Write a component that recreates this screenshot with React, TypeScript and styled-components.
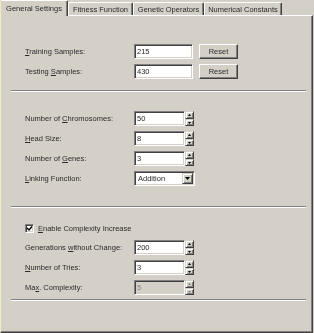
import React from 'react';
import styled, { createGlobalStyle } from 'styled-components';

const GlobalStyle = createGlobalStyle`
  html, body { margin: 0; padding: 0; background: #d4d0c8; }
  body {
    font-family: "Liberation Sans", Arial, sans-serif;
    font-size: 7.5px;
    color: #2a2a2a;
  }
`;

const Window = styled.div`
  width: 314px;
  height: 333px;
  background: #d4d0c8;
  overflow: hidden;
  display: flex;
  flex-direction: column;
  will-change: transform;
`;

const TabStrip = styled.div`
  display: flex;
  align-items: flex-end;
  height: 15px;
  position: relative;
  z-index: 1;
`;

const Tab = styled.div<{ $w: number; $active?: boolean }>`
  width: ${(p) => p.$w}px;
  box-sizing: border-box;
  height: ${(p) => (p.$active ? 16 : 13)}px;
  margin-bottom: ${(p) => (p.$active ? -1 : 0)}px;
  padding-top: ${(p) => (p.$active ? 3 : 2)}px;
  border-top: 1px solid #fff;
  border-left: 1px solid #fff;
  border-right: 1px solid #404040;
  box-shadow: inset -1px 0 #808080;
  border-radius: 2px 2px 0 0;
  background: #d4d0c8;
  text-align: center;
  white-space: nowrap;
  line-height: 9px;
  &:first-child {
    border-left-color: #f1eebb;
  }
`;

const Panel = styled.div`
  width: 313px;
  height: 318px;
  box-sizing: border-box;
  border-top: 1px solid #fff;
  border-left: 1px solid #f1eebb;
  border-right: 1px solid #404040;
  border-bottom: 1px solid #404040;
  box-shadow: inset -1px -1px #808080;
  padding: 0 6px 0 10px;
  display: flex;
  flex-direction: column;
`;

const Section = styled.div<{ $top: number }>`
  padding: ${(p) => p.$top}px 0 0 14px;
  display: flex;
  flex-direction: column;
  gap: 5px;
`;

const Separator = styled.div<{ $top: number }>`
  margin-top: ${(p) => p.$top}px;
  height: 0;
  border-top: 1px solid #808080;
  border-bottom: 1px solid #fff;
`;

const Row = styled.div`
  display: flex;
  align-items: center;
  height: 15px;
`;

const Label = styled.div`
  width: 109px;
  white-space: nowrap;
`;

const TextBox = styled.input<{ $w: number }>`
  width: ${(p) => p.$w}px;
  height: 15px;
  box-sizing: border-box;
  margin: 0;
  padding: 0 0 0 2px;
  font: inherit;
  color: #2a2a2a;
  border: 1px solid;
  border-color: #808080 #fff #fff #808080;
  box-shadow: inset 1px 1px #404040, inset -1px -1px #d4d0c8;
  background: #fff;
  outline: none;
  &:disabled {
    background: #d4d0c8;
    color: #808080;
  }
`;

const Button = styled.div`
  margin-left: 6px;
  width: 39px;
  height: 15px;
  box-sizing: border-box;
  border: 1px solid;
  border-color: #fff #404040 #404040 #fff;
  box-shadow: inset -1px -1px #808080;
  display: flex;
  align-items: center;
  justify-content: center;
`;

const Spinner = styled.div`
  display: flex;
  flex-direction: column;
  width: 9px;
  height: 15px;
`;

const SpinButton = styled.div<{ $h: number }>`
  height: ${(p) => p.$h}px;
  box-sizing: border-box;
  border: 1px solid;
  border-color: #d4d0c8 #404040 #404040 #d4d0c8;
  box-shadow: inset 1px 1px #fff, inset -1px -1px #808080;
  background: #d4d0c8;
  display: flex;
  align-items: center;
  justify-content: center;
`;

const Select = styled.div`
  width: 61px;
  height: 15px;
  box-sizing: border-box;
  border: 1px solid;
  border-color: #808080 #fff #fff #808080;
  box-shadow: inset 1px 1px #404040, inset -1px -1px #d4d0c8;
  background: #fff;
  display: flex;
  align-items: center;
  padding: 2px 1px 2px 3px;
`;

const SelectText = styled.div`
  flex: 1;
`;

const DropButton = styled.div`
  width: 11px;
  height: 11px;
  box-sizing: border-box;
  border: 1px solid;
  border-color: #d4d0c8 #404040 #404040 #d4d0c8;
  box-shadow: inset 1px 1px #fff, inset -1px -1px #808080;
  background: #d4d0c8;
  display: flex;
  align-items: center;
  justify-content: center;
`;

const CheckRow = styled.div`
  display: flex;
  align-items: center;
  gap: 4px;
  height: 11px;
  margin-bottom: 1px;
`;

const CheckBox = styled.div`
  width: 9px;
  height: 9px;
  box-sizing: border-box;
  border: 1px solid;
  border-color: #808080 #fff #fff #808080;
  box-shadow: inset 1px 1px #404040, inset -1px -1px #d4d0c8;
  background: #fff;
  display: flex;
  align-items: center;
  justify-content: center;
`;

const Arrow = ({ up, color = '#000' }: { up?: boolean; color?: string }) => (
  <svg width="3" height="2" viewBox="0 0 3 2" style={{ display: 'block' }}>
    <polygon points={up ? '1.5,0 3,2 0,2' : '0,0 3,0 1.5,2'} fill={color} />
  </svg>
);

const SpinField = ({ value, disabled }: { value: string; disabled?: boolean }) => (
  <>
    <TextBox $w={51} defaultValue={value} readOnly disabled={disabled} />
    <Spinner>
      <SpinButton $h={8}>
        <Arrow up color={disabled ? '#808080' : '#000'} />
      </SpinButton>
      <SpinButton $h={7}>
        <Arrow color={disabled ? '#808080' : '#000'} />
      </SpinButton>
    </Spinner>
  </>
);

export default function App() {
  return (
    <Window>
      <GlobalStyle />
      <TabStrip>
        <Tab $w={68} $active>General Settings</Tab>
        <Tab $w={65}>Fitness Function</Tab>
        <Tab $w={71}>Genetic Operators</Tab>
        <Tab $w={78}>Numerical Constants</Tab>
      </TabStrip>
      <Panel>
        <Section $top={28}>
          <Row>
            <Label><u>T</u>raining Samples:</Label>
            <TextBox $w={59} defaultValue="215" readOnly />
            <Button>Reset</Button>
          </Row>
          <Row>
            <Label>Testing <u>S</u>amples:</Label>
            <TextBox $w={59} defaultValue="430" readOnly />
            <Button>Reset</Button>
          </Row>
        </Section>
        <Separator $top={11} />
        <Section $top={19}>
          <Row>
            <Label>Number of <u>C</u>hromosomes:</Label>
            <SpinField value="50" />
          </Row>
          <Row>
            <Label><u>H</u>ead Size:</Label>
            <SpinField value="8" />
          </Row>
          <Row>
            <Label>Number of <u>G</u>enes:</Label>
            <SpinField value="3" />
          </Row>
          <Row>
            <Label><u>L</u>inking Function:</Label>
            <Select>
              <SelectText>Addition</SelectText>
              <DropButton>
                <svg width="5" height="3" viewBox="0 0 5 3" style={{ display: 'block' }}>
                  <polygon points="0,0 5,0 2.5,3" fill="#000" />
                </svg>
              </DropButton>
            </Select>
          </Row>
        </Section>
        <Separator $top={20} />
        <Section $top={15}>
          <CheckRow>
            <CheckBox>
              <svg width="7" height="7" viewBox="0 0 7 7" style={{ display: 'block' }}>
                <polyline points="1,3 3,5 6,1.5" fill="none" stroke="#000" strokeWidth="1.4" />
              </svg>
            </CheckBox>
            <span><u>E</u>nable Complexity Increase</span>
          </CheckRow>
          <Row>
            <Label>Generations <u>w</u>ithout Change:</Label>
            <SpinField value="200" />
          </Row>
          <Row>
            <Label><u>N</u>umber of Tries:</Label>
            <SpinField value="3" />
          </Row>
          <Row>
            <Label>Ma<u>x</u>. Complexity:</Label>
            <SpinField value="5" disabled />
          </Row>
        </Section>
        <Separator $top={4} />
      </Panel>
    </Window>
  );
}
